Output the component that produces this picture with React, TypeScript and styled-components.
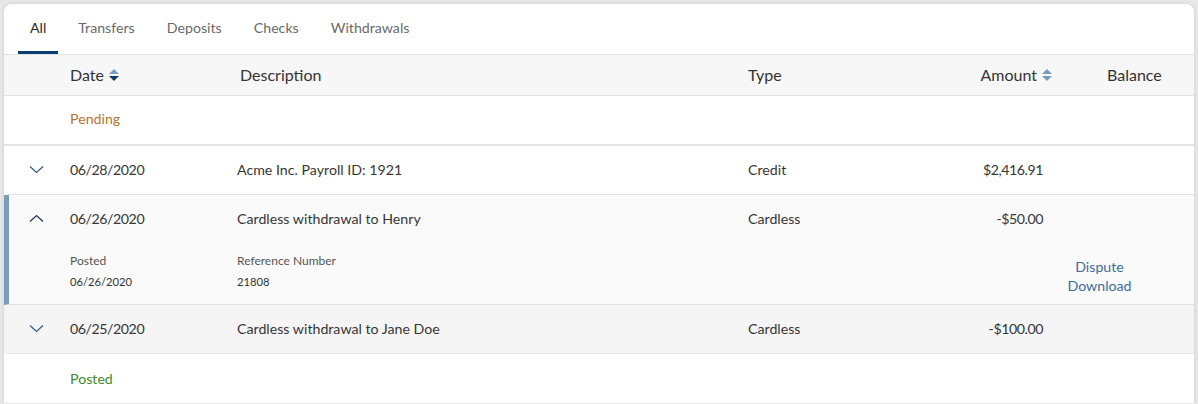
import styled, { createGlobalStyle } from "styled-components";

const GlobalStyle = createGlobalStyle`
  html, body {
    margin: 0;
    background: #e8e8e8;
    font-family: Lato, "Open Sans", "Liberation Sans", sans-serif;
    color: #363636;
  }
`;

const Page = styled.div`
  padding: 4px 4px 0 4px;
`;

const Card = styled.div`
  background: #fff;
  border-radius: 8px 8px 0 0;
  box-shadow: 0 0 4px rgba(0, 0, 0, 0.12);
  overflow: hidden;
`;

const Tabs = styled.div`
  display: flex;
  height: 50px;
  padding-left: 14px;
  border-bottom: 1px solid #e2e2e2;
`;

const Tab = styled.div<{ $active?: boolean }>`
  display: flex;
  align-items: center;
  padding: 0 12px;
  margin-right: 8px;
  font-size: 14.2px;
  color: ${(p) => (p.$active ? "#2b2b2b" : "#6a6a6a")};
  border-bottom: 3px solid ${(p) => (p.$active ? "#0b3d6e" : "transparent")};
  box-sizing: border-box;
`;

const cols = "66px 167px 511px 152px 153px 1fr";
const innerCols = "61px 167px 511px 152px 153px 1fr";

const HeaderRow = styled.div`
  display: grid;
  grid-template-columns: ${cols};
  height: 41px;
  align-items: center;
  background: #f7f7f7;
  border-bottom: 1px solid #e2e2e2;
  font-size: 16px;
  color: #333;
  padding-bottom: 1px;
  box-sizing: border-box;
`;

const HeadCell = styled.div<{ $right?: boolean; $pad?: number }>`
  display: flex;
  align-items: center;
  justify-content: ${(p) => (p.$right ? "flex-end" : "flex-start")};
  padding-left: ${(p) => p.$pad ?? 0}px;
  gap: 4px;
`;

const GroupRow = styled.div<{ $color: string; $thick?: boolean }>`
  display: grid;
  grid-template-columns: ${cols};
  height: ${(p) => (p.$thick ? "50px" : "49px")};
  align-items: center;
  font-size: 14.2px;
  color: ${(p) => p.$color};
  border-bottom: ${(p) => (p.$thick ? "2px solid #e4e4e4" : "none")};
  padding-bottom: ${(p) => (p.$thick ? "4px" : "0")};
  box-sizing: border-box;
`;

const Txn = styled.div<{ $expanded?: boolean; $bg: string }>`
  background: ${(p) => p.$bg};
  border-bottom: 1px solid #e2e2e2;
  border-left: 5px solid ${(p) => (p.$expanded ? "#7b9dbd" : "transparent")};
`;

const TxnRow = styled.div`
  display: grid;
  grid-template-columns: ${innerCols};
  height: 48px;
  align-items: center;
  font-size: 14.2px;
  padding-bottom: 2px;
  box-sizing: border-box;
`;

const Cell = styled.div<{ $right?: boolean; $num?: boolean }>`
  text-align: ${(p) => (p.$right ? "right" : "left")};
  padding-right: ${(p) => (p.$right ? "10px" : "0")};
  letter-spacing: ${(p) => (p.$num ? "-0.45px" : "0")};
`;

const ChevronCell = styled.div`
  display: flex;
  justify-content: center;
  padding-right: 6px;
`;

const Details = styled.div`
  display: grid;
  grid-template-columns: ${innerCols};
  height: 61px;
  padding-top: 10px;
  box-sizing: border-box;
`;

const DetailBlock = styled.div`
  display: flex;
  flex-direction: column;
  gap: 7px;
`;

const DetailLabel = styled.div`
  font-size: 12px;
  color: #555;
`;

const DetailValue = styled.div`
  font-size: 11.2px;
  color: #333;
`;

const Links = styled.div`
  display: flex;
  flex-direction: column;
  align-items: center;
  padding-top: 4px;
  padding-right: 48px;
  line-height: 19px;
`;

const Link = styled.a`
  font-size: 14.2px;
  color: #3d6d9d;
  text-decoration: none;
`;

const Chevron = ({ up }: { up?: boolean }) => (
  <svg width="15" height="9" viewBox="0 0 15 9">
    <polyline
      points={up ? "1,7.5 7.5,1.5 14,7.5" : "1,1.5 7.5,7.5 14,1.5"}
      fill="none"
      stroke={up ? "#1e3550" : "#2d5c8a"}
      strokeWidth="1.2"
    />
  </svg>
);

const SortIcon = ({ active }: { active?: boolean }) => (
  <svg width="12" height="16" viewBox="0 0 12 16">
    <polygon points="1,7 6,2 11,7" fill="#7b9dbd" />
    <polygon points="1,9 6,14 11,9" fill={active ? "#123a66" : "#7b9dbd"} />
  </svg>
);

const rows = [
  { date: "06/28/2020", desc: "Acme Inc. Payroll ID: 1921", type: "Credit", amount: "$2,416.91", bg: "#fff" },
  { date: "06/26/2020", desc: "Cardless withdrawal to Henry", type: "Cardless", amount: "-$50.00", bg: "#fafafa", expanded: true },
  { date: "06/25/2020", desc: "Cardless withdrawal to Jane Doe", type: "Cardless", amount: "-$100.00", bg: "#f5f5f5" },
];

const App = () => {
  return (
    <Page>
      <GlobalStyle />
      <Card>
        <Tabs>
          <Tab $active>All</Tab>
          <Tab>Transfers</Tab>
          <Tab>Deposits</Tab>
          <Tab>Checks</Tab>
          <Tab>Withdrawals</Tab>
        </Tabs>

        <HeaderRow>
          <div />
          <HeadCell>
            Date <SortIcon active />
          </HeadCell>
          <HeadCell $pad={3}>Description</HeadCell>
          <HeadCell>Type</HeadCell>
          <HeadCell $right>
            Amount <SortIcon />
          </HeadCell>
          <HeadCell $pad={54}>Balance</HeadCell>
        </HeaderRow>

        <GroupRow $color="#b5742f" $thick>
          <div />
          <div>Pending</div>
        </GroupRow>

        {rows.map((r) => (
          <Txn key={r.date} $bg={r.bg} $expanded={r.expanded}>
            <TxnRow>
              <ChevronCell>
                <Chevron up={r.expanded} />
              </ChevronCell>
              <Cell $num>{r.date}</Cell>
              <Cell>{r.desc}</Cell>
              <Cell>{r.type}</Cell>
              <Cell $right $num>
                {r.amount}
              </Cell>
              <Cell />
            </TxnRow>
            {r.expanded && (
              <Details>
                <div />
                <DetailBlock>
                  <DetailLabel>Posted</DetailLabel>
                  <DetailValue>06/26/2020</DetailValue>
                </DetailBlock>
                <DetailBlock>
                  <DetailLabel>Reference Number</DetailLabel>
                  <DetailValue>21808</DetailValue>
                </DetailBlock>
                <div />
                <div />
                <Links>
                  <Link href="#">Dispute</Link>
                  <Link href="#">Download</Link>
                </Links>
              </Details>
            )}
          </Txn>
        ))}

        <GroupRow $color="#3b8a2d">
          <div />
          <div>Posted</div>
        </GroupRow>
      </Card>
    </Page>
  );
};

export default App;
